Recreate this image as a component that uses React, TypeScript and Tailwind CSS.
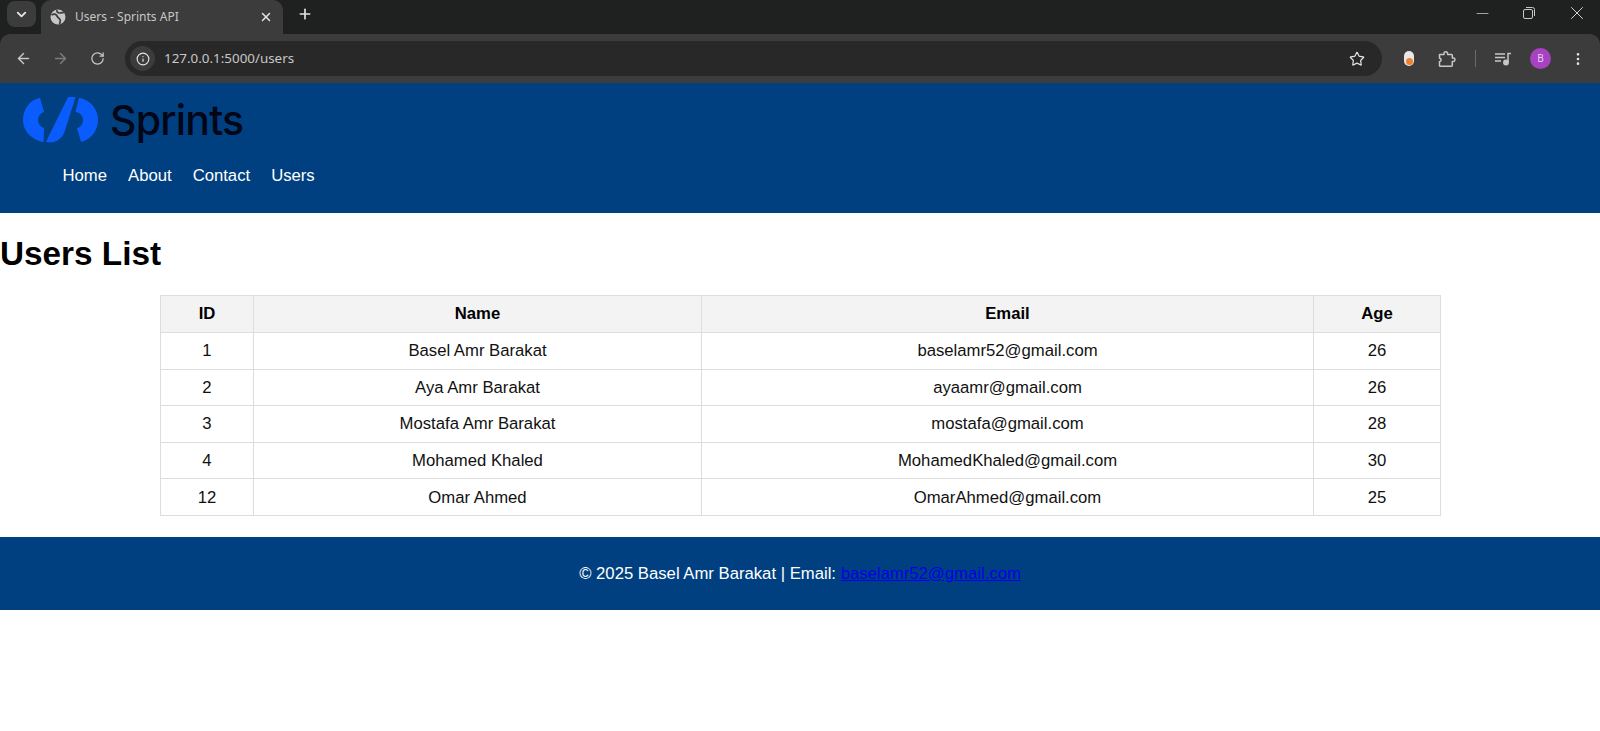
import { ArrowLeft, ArrowRight, RotateCw, Info, Star, X, Plus, ChevronDown, Minus, EllipsisVertical } from "lucide-react";

const users = [
  [1, "Basel Amr Barakat", "baselamr52@gmail.com", 26],
  [2, "Aya Amr Barakat", "ayaamr@gmail.com", 26],
  [3, "Mostafa Amr Barakat", "mostafa@gmail.com", 28],
  [4, "Mohamed Khaled", "MohamedKhaled@gmail.com", 30],
  [12, "Omar Ahmed", "OmarAhmed@gmail.com", 25],
];

function Globe() {
  return (
    <svg width="16" height="16" viewBox="0 0 16 16" fill="none">
      <circle cx="8" cy="8" r="7.5" fill="#c4c7c5" />
      <path d="M1.500 6C4 4.500 6 5 7 7s2 2 3 3.500 0 3 -.5 4.500M7 1c-.5 1.500 .5 3 2.500 3s3.500-.5 4.500-.5" stroke="#3c3c3c" strokeWidth="1.700" />
    </svg>
  );
}

function LogoMark() {
  return (
    <svg width="75" height="46" viewBox="0 0 75 46" fill="#0b5cff">
      <path d="M17 .8 L21 15 C17.500 16 15 19.500 15 23 C15 26.500 17.500 30 21 31 L20.500 45.200 C8.500 43 0 34 0 23 C0 12 7 3 17 .8Z" />
      <path d="M45 .3 C47.500 0 50 0 52.500 .3 L41.500 35 C39 41.500 33 45.500 27 45.500 C25.500 45.500 24.500 45.300 23 44.800Z" />
      <path d="M56 .8 L52.500 15 C56.500 15.500 60 18.500 60 23 C60 27.500 57 30.500 54 31 L58 45 C68 42.500 75 33.500 75 23 C75 11.500 67 3 56 .8Z" />
    </svg>
  );
}

export default function App() {
  return (
    <div className="min-h-[731px] bg-white font-['Liberation_Sans',Arial,sans-serif] text-black">
      {/* browser chrome */}
      <div className="h-[83px] bg-[#1f2020] font-['Noto_Sans',sans-serif]">
        <div className="flex h-[34px] items-start">
          <div className="ml-[7px] mt-[1px] flex h-[26px] w-[29px] items-center justify-center rounded-lg bg-[#3c3c3c] text-[#e3e3e3]">
            <ChevronDown size={15} strokeWidth={3} />
          </div>
          <div className="ml-[5px] flex h-[34px] w-[242px] items-center rounded-t-[10px] bg-[#3c3c3c] pl-[9px] pr-[10px] text-[#c7c7c7]">
            <Globe />
            <span className="ml-[9px] flex-1 text-[12px]">Users - Sprints API</span>
            <X size={14} strokeWidth={2.5} className="text-[#e3e3e3]" />
          </div>
          <Plus size={16} strokeWidth={2.5} className="ml-[14px] mt-[6px] text-[#e3e3e3]" />
          <div className="flex-1" />
          <Minus size={19} strokeWidth={1.1} className="mr-[1px] mt-[3.500px] text-[#b5b5b5]" />
          <svg width="12" height="12" viewBox="0 0 12 12" fill="none" stroke="#c7c7c7" className="ml-[30px] mt-[7px]">
            <rect x=".5" y="2.500" width="9" height="9" rx="1.500" />
            <path d="M3 .5h6.500a2 2 0 0 1 2 2V9" />
          </svg>
          <X size={22} strokeWidth={1} className="ml-[31px] mr-[12px] mt-[2px] text-[#e3e3e3]" />
        </div>
        <div className="flex h-[49px] items-center rounded-t-[10px] bg-[#3c3c3c] text-[#c7c7c7]">
          <ArrowLeft size={17} strokeWidth={2} className="ml-[15px]" />
          <ArrowRight size={17} strokeWidth={2} className="ml-[20px] text-[#7d7d7d]" />
          <RotateCw size={15} strokeWidth={2} className="ml-[21px]" />
          <div className="ml-[20px] flex h-[35px] w-[1257px] items-center rounded-full bg-[#282828] pl-[5px] pr-[17px]">
            <div className="flex h-[25px] w-[25px] items-center justify-center rounded-full bg-[#3c3c3c] text-[#e3e3e3]">
              <Info size={14} />
            </div>
            <span className="ml-[9px] flex-1 text-[13.4px] text-[#c7c7c7]">127.0.0.1:5000/users</span>
            <Star size={16} strokeWidth={1.8} className="text-[#e3e3e3]" />
          </div>
          <div className="relative ml-[22px] h-[15px] w-[10px] rounded-full bg-[#e8e8e8]">
            <div className="absolute bottom-[1px] left-[1.500px] h-[7px] w-[7px] rounded-full bg-[#f08030]" />
          </div>
          <svg width="18" height="18" viewBox="0 0 18 18" fill="none" stroke="#c7c7c7" strokeWidth="1.500" className="ml-[24px]">
            <path d="M1.500 4.500H6V3.500a1.800 1.800 0 0 1 3.600 0V4.500H13.500a.8.8 0 0 1 .8.8V8h1a1.700 1.700 0 0 1 0 3.400h-1v4a.8.8 0 0 1-.8.8H2.300a.8.8 0 0 1-.8-.8V11.500a1.500 1.500 0 0 0 1.500-1.800 1.500 1.500 0 0 0-1.500-1.500Z" strokeLinejoin="round" />
          </svg>
          <div className="ml-[19px] h-[17px] w-px bg-[#6b6b6b]" />
          <svg width="16" height="14" viewBox="0 0 16 14" fill="none" stroke="#c7c7c7" strokeWidth="1.500" className="ml-[19px]">
            <path d="M0 2h10M0 5.500h10M0 9h6" />
            <circle cx="11" cy="10.500" r="2.200" fill="#c7c7c7" />
            <path d="M13 10V1.500h3" />
          </svg>
          <div className="ml-[19px] flex h-[21px] w-[21px] items-center justify-center rounded-full bg-[#a742c0] text-[10px] text-[#e8d0f0]">B</div>
          <EllipsisVertical size={16} strokeWidth={2} className="ml-[19px] text-[#e3e3e3]" />
        </div>
      </div>

      {/* header */}
      <header className="h-[130px] bg-[#004080] pl-[23px] pt-[14px]">
        <div className="flex h-[46px] items-center">
          <LogoMark />
          <span className="ml-[12px] font-['Inter',sans-serif] text-[41px] font-medium leading-none tracking-[-0.8px] text-[#020617]">Sprints</span>
        </div>
        <nav className="ml-[39.500px] mt-[20px] flex gap-[21px] text-[16.700px] text-white">
          <a>Home</a>
          <a>About</a>
          <a>Contact</a>
          <a>Users</a>
        </nav>
      </header>

      {/* main */}
      <h1 className="mt-[22px] text-[33.300px] font-bold leading-[37px]">Users List</h1>
      <table className="ml-[160px] mt-[23px] w-[1280px] table-fixed border-collapse text-center text-[16.700px] text-[#111111]">
        <colgroup>
          <col className="w-[93px]" />
          <col className="w-[448px]" />
          <col className="w-[612px]" />
          <col className="w-[127px]" />
        </colgroup>
        <thead>
          <tr className="h-[37px] bg-[#f3f3f3] font-bold text-black">
            <th className="border border-[#dddddd]">ID</th>
            <th className="border border-[#dddddd]">Name</th>
            <th className="border border-[#dddddd]">Email</th>
            <th className="border border-[#dddddd]">Age</th>
          </tr>
        </thead>
        <tbody>
          {users.map((u) => (
            <tr key={u[0]} className="h-[36.600px]">
              {u.map((c, i) => (
                <td key={i} className="border border-[#dddddd]">{c}</td>
              ))}
            </tr>
          ))}
        </tbody>
      </table>

      {/* footer */}
      <footer className="mt-[21px] flex h-[73px] items-center justify-center bg-[#004080] text-[16.700px] text-white">
        <p>© 2025 Basel Amr Barakat | Email: <a className="text-[#0000ee] underline">baselamr52@gmail.com</a></p>
      </footer>
    </div>
  );
}
